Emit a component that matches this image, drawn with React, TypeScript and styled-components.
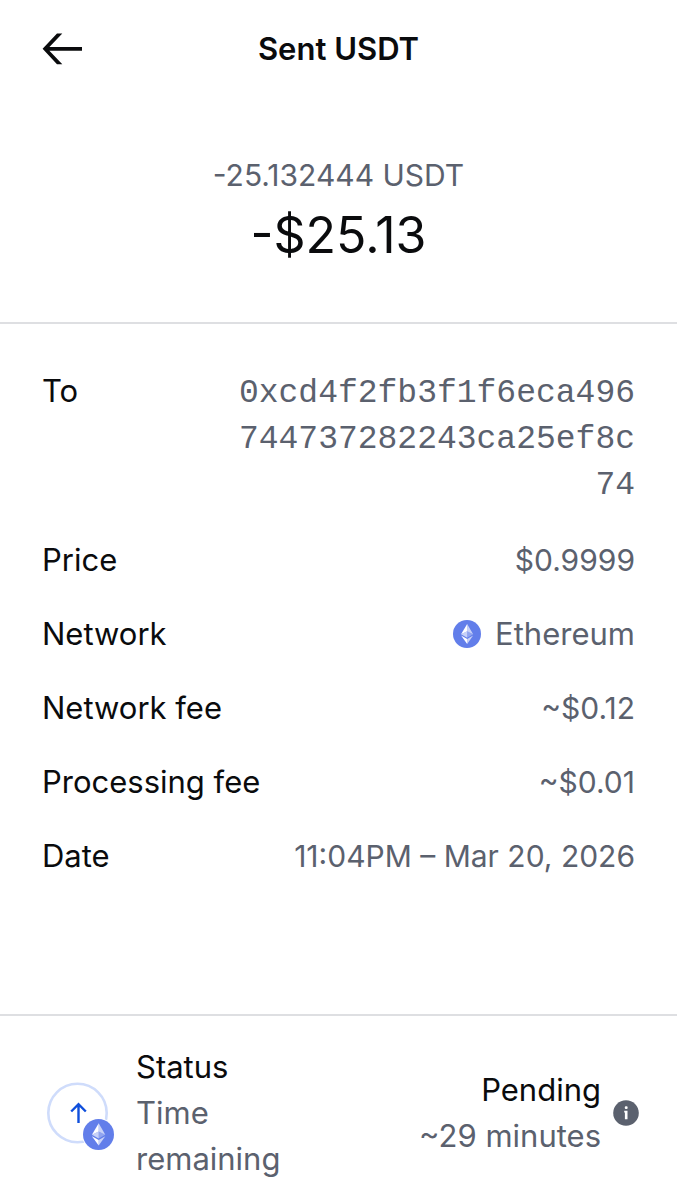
import React from "react";
import styled, { createGlobalStyle } from "styled-components";

const ink = "#0a0b0d";
const muted = "#5b616e";
const line = "#dedfe2";

const GlobalStyle = createGlobalStyle`
  * { box-sizing: border-box; }
  body {
    margin: 0;
    background: #ffffff;
    color: ${ink};
    font-family: Inter, "Liberation Sans", sans-serif;
    font-size: 31px;
    line-height: 46px;
  }
  h1, p, dl, dd { margin: 0; }
  button { font: inherit; color: inherit; }
`;

const Screen = styled.main`
  display: flex;
  flex-direction: column;
  min-height: 100vh;
`;

const Header = styled.header`
  display: grid;
  grid-template-columns: 1fr auto 1fr;
  align-items: center;
  padding: 26px 42px;
`;

const IconButton = styled.button`
  display: flex;
  justify-self: start;
  padding: 0;
  border: 0;
  background: none;
  cursor: pointer;
`;

const Title = styled.h1`
  font-size: 31px;
  font-weight: 600;
  line-height: 46px;
`;

const Summary = styled.section`
  padding: 54px 42px 50px;
  border-bottom: 2px solid ${line};
  text-align: center;
`;

const CryptoAmount = styled.p`
  color: ${muted};
  font-size: 30px;
`;

const FiatAmount = styled.p`
  font-size: 50px;
  line-height: 74px;
`;

const Details = styled.dl`
  display: flex;
  flex-direction: column;
  flex: 1;
  gap: 28px;
  padding: 44px 42px 130px;
`;

const Row = styled.div`
  display: flex;
  justify-content: space-between;
`;

const Value = styled.dd<{ $kind: "text" | "number" | "address" }>`
  display: flex;
  align-items: center;
  gap: 14px;
  max-width: 68%;
  color: ${muted};
  font-size: ${({ $kind }) => ($kind === "number" ? 30 : 31)}px;
  text-align: right;
  ${({ $kind }) =>
    $kind === "address" &&
    `
    display: block;
    padding-top: 3px;
    font-family: "Liberation Mono", monospace;
    font-size: 33px;
    word-break: break-all;
  `}
`;

const StatusBar = styled.footer`
  display: flex;
  align-items: center;
  padding: 28px 38px 17px 46px;
  border-top: 2px solid ${line};
`;

const StatusIcon = styled.div`
  position: relative;
  flex: none;
  display: flex;
  width: 62px;
  height: 62px;
  margin-right: 28px;
`;

const Badge = styled.span`
  position: absolute;
  right: -6px;
  bottom: -6px;
  display: flex;
  border-radius: 50%;
  box-shadow: 0 0 0 1px #ffffff;
`;

const StatusText = styled.div<{ $end?: boolean }>`
  flex: ${({ $end }) => ($end ? 3 : 2)} 1 0;
  text-align: ${({ $end }) => ($end ? "right" : "left")};
`;

const StatusNote = styled.p`
  color: ${muted};
`;

const InfoButton = styled(IconButton)`
  margin-left: 12px;
`;

const BackArrow = () => (
  <svg width="40" height="32" viewBox="0 0 40 32" fill={ink} aria-hidden="true">
    <path d="M15 .5H20.3L7.4 13.9H40V17.7H7.4L20.3 31.2H15L.6 15.8Z" />
  </svg>
);

const EthereumLogo = ({ size }: { size: number }) => (
  <svg width={size} height={size} viewBox="0 0 32 32" aria-hidden="true">
    <circle cx="16" cy="16" r="16" fill="#627eea" />
    <g fill="#ffffff">
      <path fillOpacity=".65" d="M16.2 4.5V12.9L23 16.2Z" />
      <path d="M16.2 4.5L9.2 16.2L16.2 12.9Z" />
      <path fillOpacity=".65" d="M16.2 21.6V27.3L23 17.7Z" />
      <path d="M16.2 27.3V21.6L9.2 17.7Z" />
      <path fillOpacity=".3" d="M16.2 20.2L23 16.2L16.2 12.9Z" />
      <path fillOpacity=".65" d="M9.2 16.2L16.2 20.2V12.9Z" />
    </g>
  </svg>
);

const SendCircle = () => (
  <svg width="62" height="62" viewBox="0 0 62 62" fill="none" aria-hidden="true">
    <circle cx="31.5" cy="31" r="29.2" stroke="#cfdcfb" strokeWidth="2.6" />
    <path d="M32.5 41V22M25.2 29.5L32.5 22.1L39.8 29.5" stroke="#0f4fdc" strokeWidth="2.4" />
  </svg>
);

const InfoIcon = () => (
  <svg width="26" height="26" viewBox="0 0 26 26" aria-hidden="true">
    <circle cx="13" cy="13" r="12.8" fill={muted} />
    <rect x="11.8" y="6.2" width="2.8" height="2.8" rx="1" fill="#ffffff" />
    <path d="M11.2 10.8H14.5V19.3H11.9V12.4H11.2Z" fill="#ffffff" />
  </svg>
);

type Detail = {
  label: string;
  value: string;
  kind: "text" | "number" | "address";
  logo?: boolean;
};

const details: Detail[] = [
  { label: "To", value: "0xcd4f2fb3f1f6eca496744737282243ca25ef8c74", kind: "address" },
  { label: "Price", value: "$0.9999", kind: "number" },
  { label: "Network", value: "Ethereum", kind: "text", logo: true },
  { label: "Network fee", value: "~$0.12", kind: "number" },
  { label: "Processing fee", value: "~$0.01", kind: "number" },
  { label: "Date", value: "11:04PM – Mar 20, 2026", kind: "number" },
];

export default function App() {
  return (
    <>
      <GlobalStyle />
      <Screen>
        <Header>
          <IconButton type="button" aria-label="Back">
            <BackArrow />
          </IconButton>
          <Title>Sent USDT</Title>
        </Header>
        <Summary>
          <CryptoAmount>-25.132444 USDT</CryptoAmount>
          <FiatAmount>-$25.13</FiatAmount>
        </Summary>
        <Details>
          {details.map(({ label, value, kind, logo }) => (
            <Row key={label}>
              <dt>{label}</dt>
              <Value $kind={kind}>
                {logo && <EthereumLogo size={28} />}
                {value}
              </Value>
            </Row>
          ))}
        </Details>
        <StatusBar>
          <StatusIcon>
            <SendCircle />
            <Badge>
              <EthereumLogo size={31} />
            </Badge>
          </StatusIcon>
          <StatusText>
            <p>Status</p>
            <StatusNote>Time remaining</StatusNote>
          </StatusText>
          <StatusText $end>
            <p>Pending</p>
            <StatusNote>~29 minutes</StatusNote>
          </StatusText>
          <InfoButton type="button" aria-label="About this status">
            <InfoIcon />
          </InfoButton>
        </StatusBar>
      </Screen>
    </>
  );
}
